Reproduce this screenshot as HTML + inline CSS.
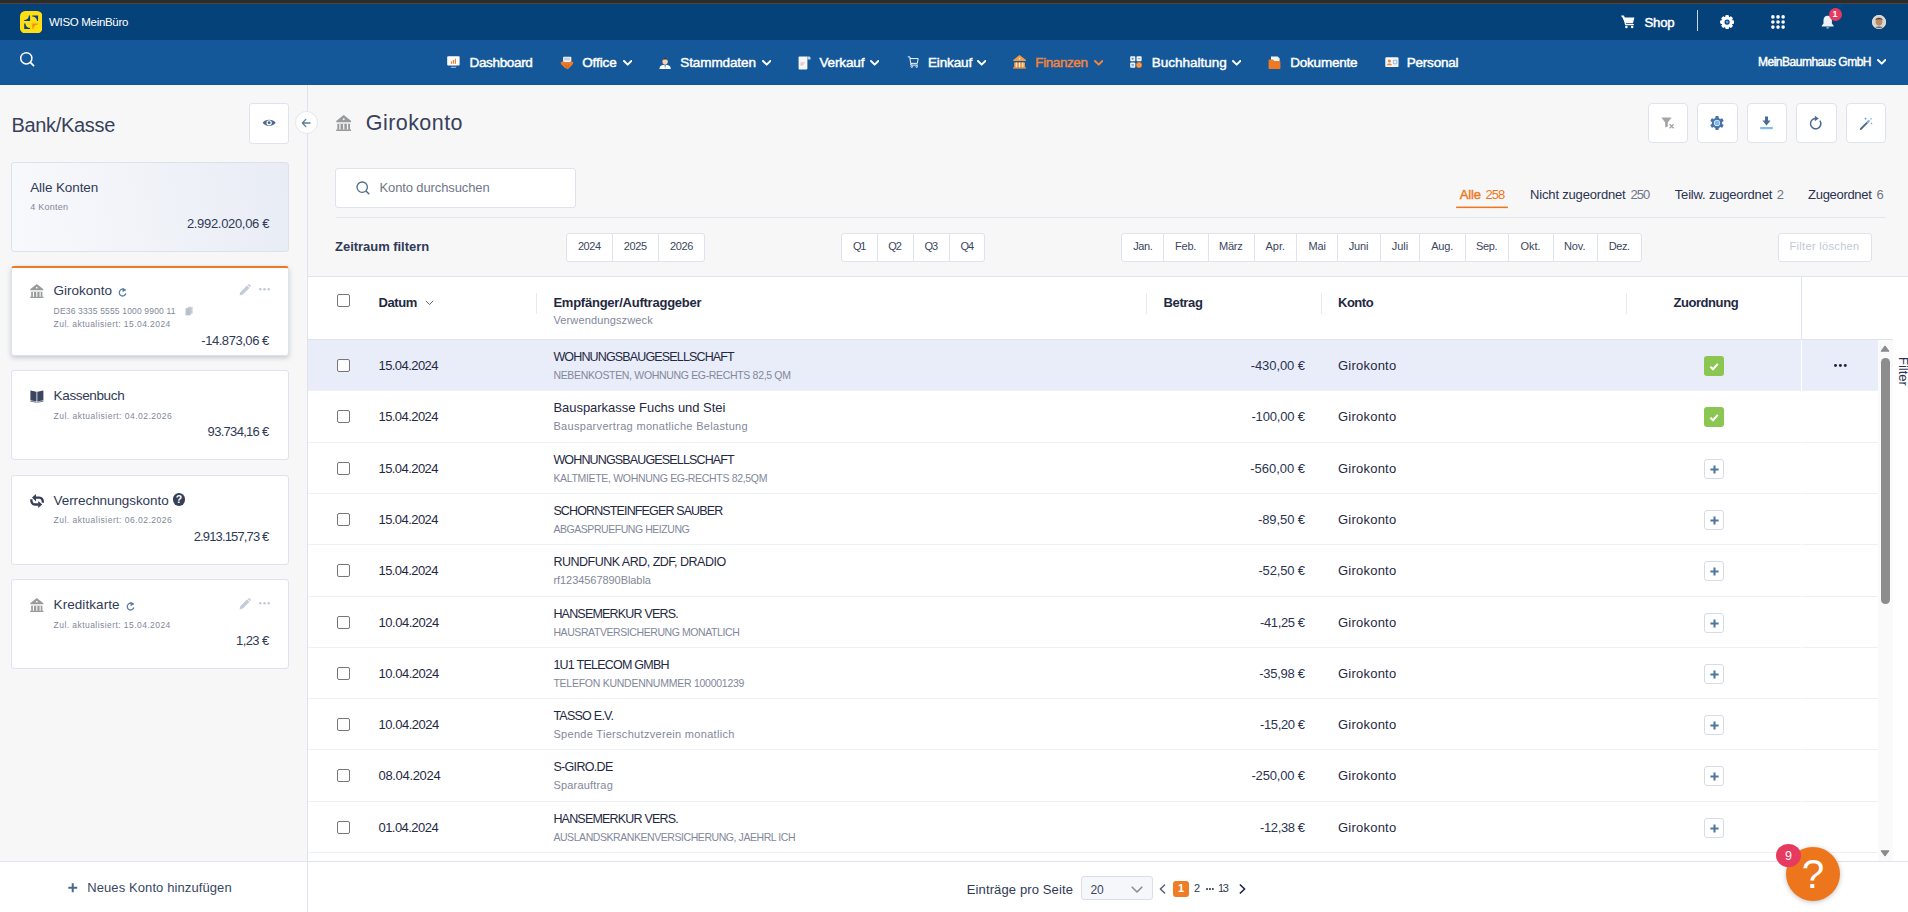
<!DOCTYPE html>
<html lang="de">
<head>
<meta charset="utf-8">
<title>WISO MeinBüro – Bank/Kasse – Girokonto</title>
<style>
*{box-sizing:border-box;margin:0;padding:0}
html,body{width:1908px;height:912px;overflow:hidden;background:#f7f7f7;font-family:"Liberation Sans",sans-serif;color:#1f2942}
body{position:relative}
.t{position:absolute;white-space:nowrap;line-height:1}
.card{position:absolute;left:11px;width:278px;border:1px solid #dde2ef;border-radius:3px;background:#fff}
.btn{position:absolute;background:#fff;border:1px solid #dfe3ee;border-radius:3px}
.seg{position:absolute;top:233px;height:29px;background:#fff;border:1px solid #dfe3ee;border-radius:3px}
.seg i{position:absolute;top:0;width:1px;height:27px;background:#dfe3ee}
.row{position:absolute;left:308px;width:1570px;border-bottom:1px solid #eef0f6;background:#fff}

</style>
</head>
<body>

<header>
<div style="position:absolute;left:0px;top:0px;width:1908px;height:4px;background:#2c2c2c"></div>
<div style="position:absolute;left:0px;top:3px;width:1908px;height:1px;background:#4a4541"></div>
<div style="position:absolute;left:0px;top:4px;width:1908px;height:36px;background:#06427a"></div>
<div style="position:absolute;left:0px;top:40px;width:1908px;height:45px;background:#14589a"></div>
<svg style="position:absolute;left:20px;top:10.8px;" width="22.4" height="22.4" viewBox="0 0 22.4 22.4"><rect x="0" y="0" width="22.4" height="22.4" rx="5.2" fill="#ffde12"/><path d="M10.1 4.4 V10.1 H4.2 V9.1 A4.7 4.7 0 0 0 8.9 4.4 Z" fill="#0a3f8c"/><path d="M12.3 4.4 H18.1 V10.1 H17 A4.7 4.7 0 0 0 12.3 5.4 Z" fill="#0a3f8c"/><path d="M4.2 12.4 H5.4 A4.7 4.7 0 0 0 10.1 17.1 V18.1 H4.2 Z" fill="#0a3f8c"/><path d="M12.3 12.4 H18.1 V13.4 A4.7 4.7 0 0 0 13.4 18.1 H12.3 Z" fill="#f18f10"/></svg>
<span class="t" style="top:16.57px;font-size:11.5px;color:#fff;letter-spacing:-0.314px;left:49px;">WISO MeinBüro</span>
<svg style="position:absolute;left:19px;top:51px;" width="17" height="17" viewBox="0 0 17 17"><circle cx="7.3" cy="7.3" r="5.6" fill="none" stroke="#fff" stroke-width="1.5"/><path d="M11.6 11.6 L14.6 14.6" stroke="#fff" stroke-width="1.7" stroke-linecap="round"/></svg>
<svg style="position:absolute;left:1621px;top:15px;" width="15" height="14" viewBox="0 0 15 14"><path d="M0.6 1 H2.6 L3.3 2.6 H13.4 L12 8.3 H4.3 Z" fill="#fff"/><path d="M0.6 1 H2.6 L4.6 9.6 H12.4" fill="none" stroke="#fff" stroke-width="1.2" stroke-linejoin="round" stroke-linecap="round"/><circle cx="5.4" cy="12" r="1.3" fill="#fff"/><circle cx="11.2" cy="12" r="1.3" fill="#fff"/></svg>
<span class="t" style="top:16.03px;font-size:13.2px;color:#fff;letter-spacing:-0.203px;left:1644.5px;-webkit-text-stroke:0.45px #fff;">Shop</span>
<div style="position:absolute;left:1696.6px;top:10.4px;width:1.5px;height:20.4px;background:#cbd5e6"></div>
<svg style="position:absolute;left:1720.2px;top:14.9px;" width="14.2" height="14.2" viewBox="0 0 14.2 14.2"><g transform="translate(7.1 7.1)" fill="#fff"><rect x="-1.8" y="-7" width="3.6" height="4" rx="1.1" transform="rotate(0)"/><rect x="-1.8" y="-7" width="3.6" height="4" rx="1.1" transform="rotate(45)"/><rect x="-1.8" y="-7" width="3.6" height="4" rx="1.1" transform="rotate(90)"/><rect x="-1.8" y="-7" width="3.6" height="4" rx="1.1" transform="rotate(135)"/><rect x="-1.8" y="-7" width="3.6" height="4" rx="1.1" transform="rotate(180)"/><rect x="-1.8" y="-7" width="3.6" height="4" rx="1.1" transform="rotate(225)"/><rect x="-1.8" y="-7" width="3.6" height="4" rx="1.1" transform="rotate(270)"/><rect x="-1.8" y="-7" width="3.6" height="4" rx="1.1" transform="rotate(315)"/><circle r="5.5"/><circle r="2.6" fill="#06427a"/><circle r="1.5" fill="#5b96d6"/></g></svg>
<svg style="position:absolute;left:1771px;top:15.2px;" width="14" height="14" viewBox="0 0 14 14"><circle cx="1.9" cy="1.9" r="1.8" fill="#fff"/><circle cx="1.9" cy="7" r="1.8" fill="#fff"/><circle cx="1.9" cy="12.1" r="1.8" fill="#fff"/><circle cx="7" cy="1.9" r="1.8" fill="#fff"/><circle cx="7" cy="7" r="1.8" fill="#fff"/><circle cx="7" cy="12.1" r="1.8" fill="#fff"/><circle cx="12.1" cy="1.9" r="1.8" fill="#fff"/><circle cx="12.1" cy="7" r="1.8" fill="#fff"/><circle cx="12.1" cy="12.1" r="1.8" fill="#fff"/></svg>
<svg style="position:absolute;left:1821.4px;top:14.6px;" width="13.4" height="15.3" viewBox="0 0 14 16"><path d="M7 0.8 C4.2 0.8 2.6 3 2.6 5.6 V9 L0.8 11.3 V12 H13.2 V11.3 L11.4 9 V5.6 C11.4 3 9.8 0.8 7 0.8 Z" fill="#eef1f6"/><path d="M5.3 13 A1.8 1.8 0 0 0 8.7 13 Z" fill="#eef1f6"/></svg>
<div style="position:absolute;left:1828.5px;top:8px;width:13px;height:13px;border-radius:50%;background:#e63a5e"></div>
<span class="t" style="top:10.38px;font-size:9px;color:#fff;font-weight:700;left:1835px;transform:translateX(-50%);margin-left:0.00px;">1</span>
<svg style="position:absolute;left:1872px;top:14.8px;" width="14" height="14" viewBox="0 0 15 15"><defs><clipPath id="avc"><circle cx="7.5" cy="7.5" r="7.5"/></clipPath></defs><g clip-path="url(#avc)"><rect width="15" height="15" fill="#d9d3cc"/><ellipse cx="7.5" cy="7" rx="3.6" ry="4.4" fill="#b98a6c"/><path d="M3.6 5.6 C3.8 2.4 11.2 2.4 11.4 5.6 C10 4.2 5 4.2 3.6 5.6 Z" fill="#4a3a30"/><path d="M1.5 15 C2 11.6 13 11.6 13.5 15 Z" fill="#5b6470"/></g><circle cx="7.5" cy="7.5" r="7.1" fill="none" stroke="#e8e8e8" stroke-width="0.8"/></svg>
<span class="t" style="top:55.97px;font-size:13.5px;color:#fff;letter-spacing:-0.339px;left:469.5px;-webkit-text-stroke:0.45px #fff;">Dashboard</span>
<span class="t" style="top:55.97px;font-size:13.5px;color:#fff;letter-spacing:-0.086px;left:582.2px;-webkit-text-stroke:0.45px #fff;">Office</span>
<svg style="position:absolute;left:622.7px;top:59.6px;" width="9.4" height="6.6" viewBox="0 0 9.4 6.6"><path d="M1 1 L4.7 4.6 L8.4 1" fill="none" stroke="#fff" stroke-width="2" stroke-linecap="round" stroke-linejoin="round"/></svg>
<span class="t" style="top:55.97px;font-size:13.5px;color:#fff;letter-spacing:-0.105px;left:680.3px;-webkit-text-stroke:0.45px #fff;">Stammdaten</span>
<svg style="position:absolute;left:761.7px;top:59.6px;" width="9.4" height="6.6" viewBox="0 0 9.4 6.6"><path d="M1 1 L4.7 4.6 L8.4 1" fill="none" stroke="#fff" stroke-width="2" stroke-linecap="round" stroke-linejoin="round"/></svg>
<span class="t" style="top:55.97px;font-size:13.5px;color:#fff;letter-spacing:-0.112px;left:819.4px;-webkit-text-stroke:0.45px #fff;">Verkauf</span>
<svg style="position:absolute;left:870.0px;top:59.6px;" width="9.4" height="6.6" viewBox="0 0 9.4 6.6"><path d="M1 1 L4.7 4.6 L8.4 1" fill="none" stroke="#fff" stroke-width="2" stroke-linecap="round" stroke-linejoin="round"/></svg>
<span class="t" style="top:55.97px;font-size:13.5px;color:#fff;letter-spacing:-0.147px;left:928px;-webkit-text-stroke:0.45px #fff;">Einkauf</span>
<svg style="position:absolute;left:976.7px;top:59.6px;" width="9.4" height="6.6" viewBox="0 0 9.4 6.6"><path d="M1 1 L4.7 4.6 L8.4 1" fill="none" stroke="#fff" stroke-width="2" stroke-linecap="round" stroke-linejoin="round"/></svg>
<span class="t" style="top:55.97px;font-size:13.5px;color:#f3853a;letter-spacing:-0.418px;left:1035.3px;-webkit-text-stroke:0.45px #f3853a;">Finanzen</span>
<svg style="position:absolute;left:1093.7px;top:59.6px;" width="9.4" height="6.6" viewBox="0 0 9.4 6.6"><path d="M1 1 L4.7 4.6 L8.4 1" fill="none" stroke="#f3853a" stroke-width="2" stroke-linecap="round" stroke-linejoin="round"/></svg>
<span class="t" style="top:55.97px;font-size:13.5px;color:#fff;letter-spacing:-0.006px;left:1151.7px;-webkit-text-stroke:0.45px #fff;">Buchhaltung</span>
<svg style="position:absolute;left:1231.7px;top:59.6px;" width="9.4" height="6.6" viewBox="0 0 9.4 6.6"><path d="M1 1 L4.7 4.6 L8.4 1" fill="none" stroke="#fff" stroke-width="2" stroke-linecap="round" stroke-linejoin="round"/></svg>
<span class="t" style="top:55.97px;font-size:13.5px;color:#fff;letter-spacing:-0.227px;left:1290.3px;-webkit-text-stroke:0.45px #fff;">Dokumente</span>
<span class="t" style="top:55.97px;font-size:13.5px;color:#fff;letter-spacing:-0.200px;left:1406.7px;-webkit-text-stroke:0.45px #fff;">Personal</span>
<svg style="position:absolute;left:446.8px;top:56.1px;" width="13" height="12.4" viewBox="0 0 13 12.4"><rect x="0.2" y="0.2" width="12.4" height="9.4" rx="1" fill="#fff"/><rect x="3.8" y="5.4" width="1.2" height="2.4" fill="#f08334"/><rect x="5.8" y="4" width="1.2" height="3.8" fill="#f08334"/><rect x="7.8" y="2.6" width="1.2" height="5.2" fill="#f08334"/><rect x="3.8" y="10.7" width="5.4" height="1.1" rx="0.5" fill="#b9c6da"/></svg>
<svg style="position:absolute;left:559.5px;top:55.5px;" width="14" height="14" viewBox="0 0 14 14"><rect x="3.1" y="0.7" width="8.2" height="5.8" rx="0.8" fill="#f4f6fa"/><path d="M4.2 2.2 H10.2 M4.2 3.8 H10.2" stroke="#9fb0c8" stroke-width="0.7"/><path d="M0.6 6.2 L3 5.2 L5 6.6 L7 6 L9 6.6 L11 5.2 L13.4 6.2 L12.6 8.6 L10.6 10.4 L9.4 12 L7.6 13.2 L6 12.6 L4.4 11.4 L2.6 9.6 L1.2 8.4 Z" fill="#ee7a26"/><path d="M4.6 8.4 L7 10.4 L9.2 8.2 M6 11 L7.4 12.2 M8.2 10.2 L9.2 11.2" stroke="#b9561a" stroke-width="0.7" fill="none"/></svg>
<svg style="position:absolute;left:659.3px;top:56px;" width="12.2" height="13" viewBox="0 0 13 14"><path d="M0.4 14 C0.6 10.2 3.4 9.4 6.5 9.4 C9.6 9.4 12.4 10.2 12.6 14 Z" fill="#fff"/><path d="M5.9 9.6 L6.5 13.8 L7.1 9.6 Z" fill="#3d5a8c"/><ellipse cx="6.5" cy="5.6" rx="2.9" ry="3.5" fill="#f6d3b8"/><path d="M3.4 5 C3.2 0.8 9.8 0.8 9.6 5 C8.8 3.4 4.2 3.4 3.4 5 Z" fill="#3b3a40"/></svg>
<svg style="position:absolute;left:797.5px;top:55.5px;" width="13" height="14" viewBox="0 0 13 14"><path d="M0.6 1.4 C0.6 0.8 1 0.4 1.6 0.4 H9.4 V12.2 C9.4 13 8.8 13.6 8 13.6 H1.6 C1 13.6 0.6 13.2 0.6 12.6 Z" fill="#f4f6fa"/><path d="M9.4 0.4 H11 C12 0.4 12.6 1 12.6 2 V3.4 H9.4 Z" fill="#c5cfdd"/><path d="M2.4 7 H6.6 M2.4 8.8 H5.4" stroke="#f2a0a0" stroke-width="0.9"/></svg>
<svg style="position:absolute;left:906.5px;top:56.3px;" width="12.6" height="12" viewBox="0 0 13 14"><path d="M0.5 1 H2.4 L3 3 M3 3 H12.2 L11.2 8.6 H4 Z" fill="none" stroke="#fff" stroke-width="1.1" stroke-linejoin="round" stroke-linecap="round"/><path d="M4 8.6 L3.4 10.6 H11.6" fill="none" stroke="#fff" stroke-width="1.1" stroke-linecap="round" stroke-linejoin="round"/><circle cx="4.8" cy="12.4" r="1" fill="none" stroke="#fff" stroke-width="0.9"/><circle cx="10.4" cy="12.4" r="1" fill="none" stroke="#fff" stroke-width="0.9"/></svg>
<svg style="position:absolute;left:1012.8px;top:55.3px;" width="13.12" height="13.6" viewBox="0 0 13.6 14.1"><g fill="#f59a45"><path d="M6.8 0 L13.4 5.3 V6.3 H0.2 V5.3 Z"/><rect x="1.2" y="7.7" width="11.2" height="5.2"/><rect x="0.2" y="12.7" width="13.2" height="1.4"/></g><g fill="#fff3e0"><circle cx="6.8" cy="3.7" r="0.85"/><rect x="2.9" y="7.7" width="1.1" height="5"/><rect x="6.25" y="7.7" width="1.1" height="5"/><rect x="9.6" y="7.7" width="1.1" height="5"/></g></svg>
<svg style="position:absolute;left:1130px;top:56.4px;" width="12.2" height="12.2" viewBox="0 0 13.4 13.4"><g fill="#f1f4f9"><rect x="0.2" y="0.2" width="5.6" height="5.6" rx="1"/><rect x="7.2" y="0.2" width="5.6" height="5.6" rx="1"/><rect x="0.2" y="7.2" width="5.6" height="5.6" rx="1"/></g><path d="M1.6 3 H4.4 M3 1.6 V4.4 M8.6 3 H11.4 M1.6 9.4 H4.4 M1.6 10.8 H4.4" stroke="#5b7fb3" stroke-width="0.8"/><circle cx="10" cy="10" r="3.3" fill="#ef7a22"/><circle cx="10" cy="10" r="1.6" fill="none" stroke="#f9d3b5" stroke-width="0.7"/></svg>
<svg style="position:absolute;left:1268px;top:55.5px;" width="13" height="14" viewBox="0 0 13 14"><path d="M3 0.6 H9.6 L11.6 2.6 V7 H3 Z" fill="#f4f6fa"/><path d="M9.6 0.6 V2.6 H11.6 Z" fill="#c5cfdd"/><path d="M0.6 4.4 C0.6 3.8 1 3.4 1.6 3.4 H5 L6.2 5 H11.4 C12 5 12.4 5.4 12.4 6 V12 C12.4 12.6 12 13 11.4 13 H1.6 C1 13 0.6 12.6 0.6 12 Z" fill="#ef7a22"/></svg>
<svg style="position:absolute;left:1384.5px;top:57px;" width="14" height="11" viewBox="0 0 14 11"><rect x="0.3" y="0.3" width="13.2" height="9.8" rx="1.2" fill="#f4f6fa"/><circle cx="4.4" cy="4" r="1.5" fill="#f08334"/><path d="M1.8 8.2 C2 5.8 6.8 5.8 7 8.2 Z" fill="#f08334"/><rect x="8.4" y="3.2" width="3.4" height="3.6" rx="0.6" fill="none" stroke="#7fa0d0" stroke-width="0.8"/></svg>
<span class="t" style="top:55.54px;font-size:12px;color:#fff;letter-spacing:-0.494px;left:1758px;-webkit-text-stroke:0.45px #fff;">MeinBaumhaus GmbH</span>
<svg style="position:absolute;left:1876.7px;top:59px;" width="9.4" height="6.6" viewBox="0 0 9.4 6.6"><path d="M1 1 L4.7 4.6 L8.4 1" fill="none" stroke="#fff" stroke-width="2" stroke-linecap="round" stroke-linejoin="round"/></svg>
</header>

<aside>
<div style="position:absolute;left:307px;top:85px;width:1px;height:827px;background:#dfe3ee"></div>
<span class="t" style="top:114.77px;font-size:20px;color:#38425c;letter-spacing:-0.323px;left:11.5px;">Bank/Kasse</span>
<div class="btn" style="left:249px;top:103px;width:40px;height:40.5px"><svg style="position:absolute;left:11.6px;top:14.3px;" width="14.3" height="9.6" viewBox="0 0 13 9"><path d="M0.4 4.5 C2.4 0.6 10.6 0.6 12.6 4.5 C10.6 8.4 2.4 8.4 0.4 4.5 Z" fill="#4e6b8c"/><circle cx="6.5" cy="4.5" r="2.5" fill="#fff"/><circle cx="6.5" cy="4.5" r="1.4" fill="#4e6b8c"/></svg></div>
<div style="position:absolute;left:295px;top:111px;width:23px;height:23px;border-radius:50%;background:#fff;border:1px solid #e1e6f0"><svg style="position:absolute;left:5px;top:5.5px;" width="10.5" height="10" viewBox="0 0 10.5 10"><path d="M9 5 H1.6 M4.8 1.4 L1.4 5 L4.8 8.6" fill="none" stroke="#5a7d9f" stroke-width="1.35" stroke-linecap="round" stroke-linejoin="round"/></svg></div>
<div class="card" style="top:162px;height:90px;background:linear-gradient(80deg,#f8f9fc 0%,#f2f4f9 40%,#e8ecf5 100%);border-color:#dce1ee"></div>
<span class="t" style="top:180.87px;font-size:13.5px;color:#303a56;letter-spacing:-0.097px;left:30.2px;">Alle Konten</span>
<span class="t" style="top:202.88px;font-size:9px;color:#82889a;letter-spacing:0.246px;left:30.2px;">4 Konten</span>
<span class="t" style="top:217.20px;font-size:13px;color:#303a56;letter-spacing:-0.318px;left:269.5px;transform:translateX(-100%);margin-left:-0.32px;">2.992.020,06 €</span>
<div class="card" style="top:266px;height:89.6px;border-top:2px solid #ec7a24;box-shadow:0 2px 5px rgba(40,50,80,.22)"></div>
<svg style="position:absolute;left:30px;top:283.8px;" width="13.6" height="14.1" viewBox="0 0 13.6 14.1"><g fill="#999a9c"><path d="M6.8 0 L13.4 5.3 V6.3 H0.2 V5.3 Z"/><rect x="1.2" y="7.7" width="11.2" height="5.2"/><rect x="0.2" y="12.7" width="13.2" height="1.4"/></g><g fill="#fff"><circle cx="6.8" cy="3.7" r="0.85"/><rect x="2.9" y="7.7" width="1.1" height="5"/><rect x="6.25" y="7.7" width="1.1" height="5"/><rect x="9.6" y="7.7" width="1.1" height="5"/></g></svg>
<span class="t" style="top:283.77px;font-size:13.5px;color:#303a56;letter-spacing:-0.003px;left:53.6px;">Girokonto</span>
<svg style="position:absolute;left:117.8px;top:288px;overflow:visible" width="9" height="9" viewBox="0 0 12 12"><path d="M9.9 3.6 A4.5 4.5 0 1 0 10.5 7.4" fill="none" stroke="#5a7d9f" stroke-width="1.7"/><path d="M5.8 -0.4 L11 2.4 L6.2 5.6 Z" fill="#5a7d9f"/></svg>
<svg style="position:absolute;left:238.5px;top:283.5px;" width="12" height="12" viewBox="0 0 12 12"><path d="M0.6 11.4 L1.4 8.2 L8 1.6 L10.4 4 L3.8 10.6 Z" fill="#c3cad8"/><path d="M8.6 1 L9.4 0.4 C9.8 0.1 10.3 0.1 10.7 0.5 L11.5 1.3 C11.9 1.7 11.9 2.2 11.5 2.6 L11 3.2 Z" fill="#c3cad8"/></svg>
<svg style="position:absolute;left:259px;top:288.2px;overflow:visible" width="11.5" height="2.8" viewBox="0 0 11.5 2.8"><circle cx="1.3" cy="1.3" r="1.3" fill="#c3cad8"/><circle cx="5.5" cy="1.3" r="1.3" fill="#c3cad8"/><circle cx="9.700000000000001" cy="1.3" r="1.3" fill="#c3cad8"/></svg>
<span class="t" style="top:306.90px;font-size:8.5px;color:#82889a;letter-spacing:0.166px;left:53.6px;">DE36 3335 5555 1000 9900 11</span>
<svg style="position:absolute;left:184.5px;top:306px;" width="8.5" height="10" viewBox="0 0 8.5 10"><path d="M2.8 0.8 H7.6 V7.8 H2.8 Z" fill="#c9ced8"/><path d="M0.6 2.2 H5.6 V9.4 H0.6 Z" fill="#b9bfcc"/></svg>
<span class="t" style="top:319.80px;font-size:8.5px;color:#82889a;letter-spacing:0.440px;left:53.6px;">Zul. aktualisiert: 15.04.2024</span>
<span class="t" style="top:333.70px;font-size:13px;color:#303a56;letter-spacing:-0.451px;left:269.3px;transform:translateX(-100%);margin-left:-0.45px;">-14.873,06 €</span>
<div class="card" style="top:370px;height:90px"></div>
<svg style="position:absolute;left:30px;top:390px;" width="14" height="12.6" viewBox="0 0 14 12.6"><g fill="#3b4560"><path d="M0.4 0.5 L6.5 1.7 V11.4 L0.4 10.2 Z"/><path d="M13.4 0.5 L7.3 1.7 V11.4 L13.4 10.2 Z"/></g><path d="M0.3 11.2 L6.6 12.3 M13.5 11.2 L7.2 12.3" stroke="#3b4560" stroke-width="0.7" fill="none"/></svg>
<span class="t" style="top:388.57px;font-size:13.5px;color:#303a56;letter-spacing:-0.361px;left:53.6px;">Kassenbuch</span>
<span class="t" style="top:411.80px;font-size:8.5px;color:#82889a;letter-spacing:0.488px;left:53.6px;">Zul. aktualisiert: 04.02.2026</span>
<span class="t" style="top:425.10px;font-size:13px;color:#303a56;letter-spacing:-0.699px;left:269.3px;transform:translateX(-100%);margin-left:-0.70px;">93.734,16 €</span>
<div class="card" style="top:475px;height:90px"></div>
<svg style="position:absolute;left:30px;top:494px;overflow:visible" width="14.2" height="14.2" viewBox="0 0 14.2 14.2"><g fill="none" stroke="#363f58" stroke-width="2.3"><path d="M5.6 3.6 H9.2 C11.8 3.6 13 5.6 12.9 8.8"/><path d="M8.6 10.5 H5 C2.4 10.5 1.2 8.5 1.3 5.3"/></g><g fill="#363f58"><path d="M2 3.6 L6 0 V7.4 Z"/><path d="M12.2 10.5 L8.2 6.9 V14.1 Z"/></g></svg>
<span class="t" style="top:493.77px;font-size:13.5px;color:#303a56;letter-spacing:-0.079px;left:53.6px;">Verrechnungskonto</span>
<div style="position:absolute;left:173px;top:493.4px;width:12px;height:12.4px;border-radius:50%;background:#363f58"></div>
<span class="t" style="top:494.41px;font-size:10.5px;color:#fff;font-weight:700;left:179px;transform:translateX(-50%);margin-left:0.00px;">?</span>
<span class="t" style="top:516.00px;font-size:8.5px;color:#82889a;letter-spacing:0.488px;left:53.6px;">Zul. aktualisiert: 06.02.2026</span>
<span class="t" style="top:529.70px;font-size:13px;color:#303a56;letter-spacing:-0.854px;left:269.3px;transform:translateX(-100%);margin-left:-0.85px;">2.913.157,73 €</span>
<div class="card" style="top:579px;height:90px"></div>
<svg style="position:absolute;left:30px;top:598.1px;" width="13.6" height="14.1" viewBox="0 0 13.6 14.1"><g fill="#999a9c"><path d="M6.8 0 L13.4 5.3 V6.3 H0.2 V5.3 Z"/><rect x="1.2" y="7.7" width="11.2" height="5.2"/><rect x="0.2" y="12.7" width="13.2" height="1.4"/></g><g fill="#fff"><circle cx="6.8" cy="3.7" r="0.85"/><rect x="2.9" y="7.7" width="1.1" height="5"/><rect x="6.25" y="7.7" width="1.1" height="5"/><rect x="9.6" y="7.7" width="1.1" height="5"/></g></svg>
<span class="t" style="top:597.87px;font-size:13.5px;color:#303a56;letter-spacing:0.065px;left:53.6px;">Kreditkarte</span>
<svg style="position:absolute;left:126px;top:602.2px;overflow:visible" width="9" height="9" viewBox="0 0 12 12"><path d="M9.9 3.6 A4.5 4.5 0 1 0 10.5 7.4" fill="none" stroke="#5a7d9f" stroke-width="1.7"/><path d="M5.8 -0.4 L11 2.4 L6.2 5.6 Z" fill="#5a7d9f"/></svg>
<svg style="position:absolute;left:238.5px;top:597.7px;" width="12" height="12" viewBox="0 0 12 12"><path d="M0.6 11.4 L1.4 8.2 L8 1.6 L10.4 4 L3.8 10.6 Z" fill="#c3cad8"/><path d="M8.6 1 L9.4 0.4 C9.8 0.1 10.3 0.1 10.7 0.5 L11.5 1.3 C11.9 1.7 11.9 2.2 11.5 2.6 L11 3.2 Z" fill="#c3cad8"/></svg>
<svg style="position:absolute;left:259px;top:602.4px;overflow:visible" width="11.5" height="2.8" viewBox="0 0 11.5 2.8"><circle cx="1.3" cy="1.3" r="1.3" fill="#c3cad8"/><circle cx="5.5" cy="1.3" r="1.3" fill="#c3cad8"/><circle cx="9.700000000000001" cy="1.3" r="1.3" fill="#c3cad8"/></svg>
<span class="t" style="top:621.00px;font-size:8.5px;color:#82889a;letter-spacing:0.440px;left:53.6px;">Zul. aktualisiert: 15.04.2024</span>
<span class="t" style="top:633.50px;font-size:13px;color:#303a56;letter-spacing:-0.576px;left:269.3px;transform:translateX(-100%);margin-left:-0.58px;">1,23 €</span>
<div style="position:absolute;left:0px;top:861px;width:307px;height:51px;background:#fff;border-top:1px solid #dfe3ee"></div>
<svg style="position:absolute;left:68px;top:883.3px;" width="9.5" height="9.5" viewBox="0 0 9.5 9.5"><path d="M4.75 0.3 V9.2 M0.3 4.75 H9.2" stroke="#4a6b90" stroke-width="2"/></svg>
<span class="t" style="top:881.40px;font-size:13px;color:#3a4763;letter-spacing:0.100px;left:87.2px;">Neues Konto hinzufügen</span>
</aside>

<main>
<svg style="position:absolute;left:335.6px;top:115px;" width="15.43" height="16" viewBox="0 0 13.6 14.1"><g fill="#999a9c"><path d="M6.8 0 L13.4 5.3 V6.3 H0.2 V5.3 Z"/><rect x="1.2" y="7.7" width="11.2" height="5.2"/><rect x="0.2" y="12.7" width="13.2" height="1.4"/></g><g fill="#f7f7f7"><circle cx="6.8" cy="3.7" r="0.85"/><rect x="2.9" y="7.7" width="1.1" height="5"/><rect x="6.25" y="7.7" width="1.1" height="5"/><rect x="9.6" y="7.7" width="1.1" height="5"/></g></svg>
<span class="t" style="top:112.80px;font-size:21.5px;color:#38425c;letter-spacing:0.442px;left:365.8px;">Girokonto</span>
<div class="btn" style="left:1648px;top:103px;width:40px;height:40px;border-radius:4px"><svg style="position:absolute;left:12px;top:13.2px;overflow:visible" width="14" height="14" viewBox="0 0 14 14"><path d="M0.4 0.6 H10.6 L6.8 5.4 V9.6 L4.2 10.6 V5.4 Z" fill="#a4a4a4"/><path d="M8.6 7.2 L12.6 11.2 M12.6 7.2 L8.6 11.2" stroke="#a4a4a4" stroke-width="1.3"/></svg></div>
<div class="btn" style="left:1697.4px;top:103px;width:40.6px;height:40px;border-radius:4px"><svg style="position:absolute;left:12px;top:12.4px;overflow:visible" width="14" height="14" viewBox="0 0 14 14"><g transform="translate(7 7)"><rect x="-1.7" y="-6.9" width="3.4" height="4" rx="0.9" fill="#4a74a6" transform="rotate(0)"/><rect x="-1.7" y="-6.9" width="3.4" height="4" rx="0.9" fill="#4a74a6" transform="rotate(60)"/><rect x="-1.7" y="-6.9" width="3.4" height="4" rx="0.9" fill="#4a74a6" transform="rotate(120)"/><rect x="-1.7" y="-6.9" width="3.4" height="4" rx="0.9" fill="#4a74a6" transform="rotate(180)"/><rect x="-1.7" y="-6.9" width="3.4" height="4" rx="0.9" fill="#4a74a6" transform="rotate(240)"/><rect x="-1.7" y="-6.9" width="3.4" height="4" rx="0.9" fill="#4a74a6" transform="rotate(300)"/><circle r="5.2" fill="#4a74a6"/><circle r="3.1" fill="#fff"/><circle r="2.5" fill="#79baf1"/></g></svg></div>
<div class="btn" style="left:1747px;top:103px;width:40px;height:40px;border-radius:4px"><svg style="position:absolute;left:12.1px;top:12.4px;overflow:visible" width="14" height="14" viewBox="0 0 14 14"><path d="M5 0.4 H8 V4.6 H10.6 L6.5 9.6 L2.4 4.6 H5 Z" fill="#4a6c92"/><rect x="0.2" y="11" width="12.6" height="2.2" fill="#7fbdee"/></svg></div>
<div class="btn" style="left:1796.4px;top:103px;width:40.6px;height:40px;border-radius:4px"><svg style="position:absolute;left:12.1px;top:12.4px;overflow:visible" width="14" height="14" viewBox="0 0 14 14"><path d="M10.9 4.6 A5.2 5.2 0 1 1 6.6 2.4" fill="none" stroke="#4a6c92" stroke-width="1.5"/><path d="M5.8 -0.2 L9.8 2.5 L5.8 5.2 Z" fill="#4a6c92"/></svg></div>
<div class="btn" style="left:1846px;top:103px;width:40px;height:40px;border-radius:4px"><svg style="position:absolute;left:12.6px;top:12.6px;overflow:visible" width="14" height="14" viewBox="0 0 14 14"><path d="M0.8 12 L8.4 4.4" stroke="#4a6c92" stroke-width="1.9" stroke-linecap="round"/><path d="M7.6 5.2 L9 3.8" stroke="#9db3cc" stroke-width="1.9" stroke-linecap="round"/><path d="M5.6 0 L6.1 1.3 L7.4 1.8 L6.1 2.3 L5.6 3.6 L5.1 2.3 L3.8 1.8 L5.1 1.3 Z M11 0.4 L11.4 1.4 L12.4 1.8 L11.4 2.2 L11 3.2 L10.6 2.2 L9.6 1.8 L10.6 1.4 Z M11.4 5 L11.8 6 L12.8 6.4 L11.8 6.8 L11.4 7.8 L11 6.8 L10 6.4 L11 6 Z" fill="#6fb3ef"/></svg></div>
<div class="btn" style="left:335px;top:168px;width:241px;height:39.5px"></div>
<svg style="position:absolute;left:355.5px;top:181px;" width="15" height="15" viewBox="0 0 15 15"><circle cx="6.2" cy="6.2" r="5.2" fill="none" stroke="#4d6a8d" stroke-width="1.3"/><path d="M10.2 10.2 L12.8 12.8" stroke="#4d6a8d" stroke-width="1.5" stroke-linecap="round"/></svg>
<span class="t" style="top:181.30px;font-size:13px;color:#707789;letter-spacing:-0.119px;left:379.5px;">Konto durchsuchen</span>
<div style="position:absolute;left:335.5px;top:217px;width:1550.2px;height:1px;background:#e1e5ef"></div>
<span class="t" style="top:187.70px;font-size:13px;color:#ee7621;letter-spacing:-0.122px;left:1459.7px;-webkit-text-stroke:0.4px #ee7621;">Alle</span>
<span class="t" style="top:187.70px;font-size:13px;color:#ee7621;letter-spacing:-0.901px;left:1485.4px;">258</span>
<svg style="position:absolute;left:1456px;top:206px;" width="52" height="3" viewBox="0 0 52 3"><rect x="0.1" y="0.55" width="51.8" height="1.55" fill="#ee7621"/></svg>
<span class="t" style="top:187.70px;font-size:13px;color:#2a3450;letter-spacing:-0.180px;left:1530.1px;">Nicht zugeordnet</span>
<span class="t" style="top:187.70px;font-size:13px;color:#6e7689;letter-spacing:-1.034px;left:1630.6px;">250</span>
<span class="t" style="top:187.70px;font-size:13px;color:#2a3450;letter-spacing:-0.185px;left:1674.8px;">Teilw. zugeordnet</span>
<span class="t" style="top:187.70px;font-size:13px;color:#6e7689;letter-spacing:-1.434px;left:1776.7px;">2</span>
<span class="t" style="top:187.70px;font-size:13px;color:#2a3450;letter-spacing:-0.310px;left:1808.1px;">Zugeordnet</span>
<span class="t" style="top:187.70px;font-size:13px;color:#6e7689;letter-spacing:-1.434px;left:1876.6px;">6</span>
<span class="t" style="top:239.80px;font-size:13px;color:#303b58;font-weight:700;letter-spacing:-0.039px;left:335.1px;">Zeitraum filtern</span>
<div class="seg" style="left:566px;width:138.8px"><i style="left:45.4px"></i><i style="left:91.4px"></i></div><span class="t" style="top:240.89px;font-size:11px;color:#3b4660;letter-spacing:-0.421px;left:577.9px;">2024</span><span class="t" style="top:240.89px;font-size:11px;color:#3b4660;letter-spacing:-0.421px;left:623.8px;">2025</span><span class="t" style="top:240.89px;font-size:11px;color:#3b4660;letter-spacing:-0.396px;left:670.1px;">2026</span>
<div class="seg" style="left:841px;width:144.0px"><i style="left:34.8px"></i><i style="left:70.6px"></i><i style="left:106.7px"></i></div><span class="t" style="top:240.89px;font-size:11px;color:#3b4660;letter-spacing:-1.294px;left:853px;">Q1</span><span class="t" style="top:240.89px;font-size:11px;color:#3b4660;letter-spacing:-1.144px;left:888.3px;">Q2</span><span class="t" style="top:240.89px;font-size:11px;color:#3b4660;letter-spacing:-1.144px;left:924.5px;">Q3</span><span class="t" style="top:240.89px;font-size:11px;color:#3b4660;letter-spacing:-0.944px;left:960.4px;">Q4</span>
<div class="seg" style="left:1121px;width:520.6px"><i style="left:41.2px"></i><i style="left:85.5px"></i><i style="left:132.1px"></i><i style="left:174.0px"></i><i style="left:215.4px"></i><i style="left:258.2px"></i><i style="left:297.3px"></i><i style="left:342.5px"></i><i style="left:386.3px"></i><i style="left:430.5px"></i><i style="left:475.2px"></i></div><span class="t" style="top:240.89px;font-size:11px;color:#3b4660;letter-spacing:-0.449px;left:1133.3px;">Jan.</span><span class="t" style="top:240.89px;font-size:11px;color:#3b4660;letter-spacing:-0.254px;left:1175.1px;">Feb.</span><span class="t" style="top:240.89px;font-size:11px;color:#3b4660;letter-spacing:-0.163px;left:1218.9px;">März</span><span class="t" style="top:240.89px;font-size:11px;color:#3b4660;letter-spacing:0.005px;left:1265.5px;">Apr.</span><span class="t" style="top:240.89px;font-size:11px;color:#3b4660;letter-spacing:-0.045px;left:1308.4px;">Mai</span><span class="t" style="top:240.89px;font-size:11px;color:#3b4660;letter-spacing:-0.172px;left:1348.8px;">Juni</span><span class="t" style="top:240.89px;font-size:11px;color:#3b4660;letter-spacing:0.021px;left:1391.7px;">Juli</span><span class="t" style="top:240.89px;font-size:11px;color:#3b4660;letter-spacing:-0.185px;left:1431.2px;">Aug.</span><span class="t" style="top:240.89px;font-size:11px;color:#3b4660;letter-spacing:-0.310px;left:1475.9px;">Sep.</span><span class="t" style="top:240.89px;font-size:11px;color:#3b4660;letter-spacing:-0.043px;left:1520.6px;">Okt.</span><span class="t" style="top:240.89px;font-size:11px;color:#3b4660;letter-spacing:-0.078px;left:1563.9px;">Nov.</span><span class="t" style="top:240.89px;font-size:11px;color:#3b4660;letter-spacing:-0.431px;left:1608.7px;">Dez.</span>
<div class="seg" style="left:1778px;width:93.6px"></div>
<span class="t" style="top:240.89px;font-size:11px;color:#c3c8d3;letter-spacing:0.327px;left:1789.5px;">Filter löschen</span>
</main>

<section>
<div style="position:absolute;left:308px;top:276px;width:1600px;height:585px;background:#fff;border-top:1px solid #dfe3ee"></div>
<div style="position:absolute;left:337px;top:294px;width:13px;height:13px;border:1px solid #767676;border-radius:2px;background:#fff"></div>
<span class="t" style="top:296.30px;font-size:13px;color:#1f2942;font-weight:700;letter-spacing:-0.391px;left:378.5px;">Datum</span>
<svg style="position:absolute;left:424.5px;top:300px;" width="9" height="6" viewBox="0 0 9 6"><path d="M0.8 0.8 L4.5 4.6 L8.2 0.8" fill="none" stroke="#5c6579" stroke-width="1"/></svg>
<span class="t" style="top:296.30px;font-size:13px;color:#1f2942;font-weight:700;letter-spacing:-0.234px;left:553.4px;">Empfänger/Auftraggeber</span>
<span class="t" style="top:314.89px;font-size:11px;color:#82889a;letter-spacing:0.142px;left:553.4px;">Verwendungszweck</span>
<span class="t" style="top:296.30px;font-size:13px;color:#1f2942;font-weight:700;letter-spacing:-0.365px;left:1163.5px;">Betrag</span>
<span class="t" style="top:296.30px;font-size:13px;color:#1f2942;font-weight:700;letter-spacing:-0.489px;left:1338px;">Konto</span>
<span class="t" style="top:296.30px;font-size:13px;color:#1f2942;font-weight:700;letter-spacing:-0.422px;left:1673.4px;">Zuordnung</span>
<div style="position:absolute;left:536.3px;top:292.5px;width:1px;height:21px;background:#e6e9f1"></div>
<div style="position:absolute;left:1146px;top:292.5px;width:1px;height:21px;background:#e6e9f1"></div>
<div style="position:absolute;left:1321.2px;top:292.5px;width:1px;height:21px;background:#e6e9f1"></div>
<div style="position:absolute;left:1626.2px;top:292.5px;width:1px;height:21px;background:#e6e9f1"></div>
<div style="position:absolute;left:1801px;top:277px;width:1px;height:63px;background:#dfe3ee"></div>
<div style="position:absolute;left:308px;top:339px;width:1585px;height:1px;background:#dfe3ee"></div>
<div class="row" style="top:340px;height:51px;background:#e9edf9"></div>
<div style="position:absolute;left:337px;top:359px;width:13px;height:13px;border:1px solid #767676;border-radius:2px;background:#fff"></div>
<span class="t" style="top:359.20px;font-size:13px;color:#1f2942;letter-spacing:-0.568px;left:378.5px;">15.04.2024</span>
<span class="t" style="top:350.62px;font-size:12.5px;color:#1f2942;letter-spacing:-0.849px;left:553.4px;">WOHNUNGSBAUGESELLSCHAFT</span>
<span class="t" style="top:370.31px;font-size:10.5px;color:#82889a;letter-spacing:-0.329px;left:553.4px;">NEBENKOSTEN, WOHNUNG EG-RECHTS 82,5 QM</span>
<span class="t" style="top:359.20px;font-size:13px;color:#2a3450;letter-spacing:-0.082px;left:1305px;transform:translateX(-100%);margin-left:-0.08px;">-430,00 €</span>
<span class="t" style="top:359.20px;font-size:13px;color:#1f2942;letter-spacing:0.225px;left:1338px;">Girokonto</span>
<div style="position:absolute;left:1704px;top:356px;width:20px;height:20px;border-radius:3px;background:#8bc653"><svg style="position:absolute;left:5px;top:5.5px;" width="10" height="9" viewBox="0 0 10 9"><path d="M1.4 4.6 L4 7.2 L8.8 1.8" fill="none" stroke="#fff" stroke-width="2"/></svg></div>
<svg style="position:absolute;left:1833.6px;top:364px;overflow:visible" width="13.3" height="3.2" viewBox="0 0 13.3 3.2"><circle cx="1.5" cy="1.5" r="1.5" fill="#1f2942"/><circle cx="6.4" cy="1.5" r="1.5" fill="#1f2942"/><circle cx="11.3" cy="1.5" r="1.5" fill="#1f2942"/></svg>
<div class="row" style="top:391px;height:52px;background:#fff"></div>
<div style="position:absolute;left:337px;top:410px;width:13px;height:13px;border:1px solid #767676;border-radius:2px;background:#fff"></div>
<span class="t" style="top:410.20px;font-size:13px;color:#1f2942;letter-spacing:-0.568px;left:378.5px;">15.04.2024</span>
<span class="t" style="top:401.20px;font-size:13px;color:#1f2942;letter-spacing:-0.027px;left:553.4px;">Bausparkasse Fuchs und Stei</span>
<span class="t" style="top:420.89px;font-size:11px;color:#82889a;letter-spacing:0.318px;left:553.4px;">Bausparvertrag monatliche Belastung</span>
<span class="t" style="top:410.20px;font-size:13px;color:#2a3450;letter-spacing:-0.171px;left:1305px;transform:translateX(-100%);margin-left:-0.17px;">-100,00 €</span>
<span class="t" style="top:410.20px;font-size:13px;color:#1f2942;letter-spacing:0.225px;left:1338px;">Girokonto</span>
<div style="position:absolute;left:1704px;top:407px;width:20px;height:20px;border-radius:3px;background:#8bc653"><svg style="position:absolute;left:5px;top:5.5px;" width="10" height="9" viewBox="0 0 10 9"><path d="M1.4 4.6 L4 7.2 L8.8 1.8" fill="none" stroke="#fff" stroke-width="2"/></svg></div>
<div class="row" style="top:443px;height:51px;background:#fff"></div>
<div style="position:absolute;left:337px;top:462px;width:13px;height:13px;border:1px solid #767676;border-radius:2px;background:#fff"></div>
<span class="t" style="top:462.20px;font-size:13px;color:#1f2942;letter-spacing:-0.568px;left:378.5px;">15.04.2024</span>
<span class="t" style="top:453.62px;font-size:12.5px;color:#1f2942;letter-spacing:-0.849px;left:553.4px;">WOHNUNGSBAUGESELLSCHAFT</span>
<span class="t" style="top:473.31px;font-size:10.5px;color:#82889a;letter-spacing:-0.323px;left:553.4px;">KALTMIETE, WOHNUNG EG-RECHTS 82,5QM</span>
<span class="t" style="top:462.20px;font-size:13px;color:#2a3450;letter-spacing:-0.026px;left:1305px;transform:translateX(-100%);margin-left:-0.03px;">-560,00 €</span>
<span class="t" style="top:462.20px;font-size:13px;color:#1f2942;letter-spacing:0.225px;left:1338px;">Girokonto</span>
<div style="position:absolute;left:1704px;top:459px;width:20px;height:20px;border-radius:3px;background:#fff;border:1px solid #d6dbe8"><svg style="position:absolute;left:4.5px;top:4.5px;" width="9" height="9" viewBox="0 0 9 9"><path d="M4.5 0.4 V8.6 M0.4 4.5 H8.6" stroke="#4f789f" stroke-width="2.1"/></svg></div>
<div class="row" style="top:494px;height:51px;background:#fff"></div>
<div style="position:absolute;left:337px;top:513px;width:13px;height:13px;border:1px solid #767676;border-radius:2px;background:#fff"></div>
<span class="t" style="top:513.20px;font-size:13px;color:#1f2942;letter-spacing:-0.568px;left:378.5px;">15.04.2024</span>
<span class="t" style="top:504.62px;font-size:12.5px;color:#1f2942;letter-spacing:-0.866px;left:553.4px;">SCHORNSTEINFEGER SAUBER</span>
<span class="t" style="top:524.31px;font-size:10.5px;color:#82889a;letter-spacing:-0.447px;left:553.4px;">ABGASPRUEFUNG HEIZUNG</span>
<span class="t" style="top:513.20px;font-size:13px;color:#2a3450;letter-spacing:-0.100px;left:1305px;transform:translateX(-100%);margin-left:-0.10px;">-89,50 €</span>
<span class="t" style="top:513.20px;font-size:13px;color:#1f2942;letter-spacing:0.225px;left:1338px;">Girokonto</span>
<div style="position:absolute;left:1704px;top:510px;width:20px;height:20px;border-radius:3px;background:#fff;border:1px solid #d6dbe8"><svg style="position:absolute;left:4.5px;top:4.5px;" width="9" height="9" viewBox="0 0 9 9"><path d="M4.5 0.4 V8.6 M0.4 4.5 H8.6" stroke="#4f789f" stroke-width="2.1"/></svg></div>
<div class="row" style="top:545px;height:52px;background:#fff"></div>
<div style="position:absolute;left:337px;top:564px;width:13px;height:13px;border:1px solid #767676;border-radius:2px;background:#fff"></div>
<span class="t" style="top:564.20px;font-size:13px;color:#1f2942;letter-spacing:-0.568px;left:378.5px;">15.04.2024</span>
<span class="t" style="top:555.62px;font-size:12.5px;color:#1f2942;letter-spacing:-0.497px;left:553.4px;">RUNDFUNK ARD, ZDF, DRADIO</span>
<span class="t" style="top:574.89px;font-size:11px;color:#82889a;letter-spacing:-0.055px;left:553.4px;">rf1234567890Blabla</span>
<span class="t" style="top:564.20px;font-size:13px;color:#2a3450;letter-spacing:-0.163px;left:1305px;transform:translateX(-100%);margin-left:-0.16px;">-52,50 €</span>
<span class="t" style="top:564.20px;font-size:13px;color:#1f2942;letter-spacing:0.225px;left:1338px;">Girokonto</span>
<div style="position:absolute;left:1704px;top:561px;width:20px;height:20px;border-radius:3px;background:#fff;border:1px solid #d6dbe8"><svg style="position:absolute;left:4.5px;top:4.5px;" width="9" height="9" viewBox="0 0 9 9"><path d="M4.5 0.4 V8.6 M0.4 4.5 H8.6" stroke="#4f789f" stroke-width="2.1"/></svg></div>
<div class="row" style="top:597px;height:51px;background:#fff"></div>
<div style="position:absolute;left:337px;top:616px;width:13px;height:13px;border:1px solid #767676;border-radius:2px;background:#fff"></div>
<span class="t" style="top:616.20px;font-size:13px;color:#1f2942;letter-spacing:-0.478px;left:378.5px;">10.04.2024</span>
<span class="t" style="top:607.62px;font-size:12.5px;color:#1f2942;letter-spacing:-0.808px;left:553.4px;">HANSEMERKUR VERS.</span>
<span class="t" style="top:627.31px;font-size:10.5px;color:#82889a;letter-spacing:-0.413px;left:553.4px;">HAUSRATVERSICHERUNG MONATLICH</span>
<span class="t" style="top:616.20px;font-size:13px;color:#2a3450;letter-spacing:-0.400px;left:1305px;transform:translateX(-100%);margin-left:-0.40px;">-41,25 €</span>
<span class="t" style="top:616.20px;font-size:13px;color:#1f2942;letter-spacing:0.225px;left:1338px;">Girokonto</span>
<div style="position:absolute;left:1704px;top:613px;width:20px;height:20px;border-radius:3px;background:#fff;border:1px solid #d6dbe8"><svg style="position:absolute;left:4.5px;top:4.5px;" width="9" height="9" viewBox="0 0 9 9"><path d="M4.5 0.4 V8.6 M0.4 4.5 H8.6" stroke="#4f789f" stroke-width="2.1"/></svg></div>
<div class="row" style="top:648px;height:51px;background:#fff"></div>
<div style="position:absolute;left:337px;top:667px;width:13px;height:13px;border:1px solid #767676;border-radius:2px;background:#fff"></div>
<span class="t" style="top:667.20px;font-size:13px;color:#1f2942;letter-spacing:-0.478px;left:378.5px;">10.04.2024</span>
<span class="t" style="top:658.62px;font-size:12.5px;color:#1f2942;letter-spacing:-0.761px;left:553.4px;">1U1 TELECOM GMBH</span>
<span class="t" style="top:678.31px;font-size:10.5px;color:#82889a;letter-spacing:-0.254px;left:553.4px;">TELEFON KUNDENNUMMER 100001239</span>
<span class="t" style="top:667.20px;font-size:13px;color:#2a3450;letter-spacing:-0.263px;left:1305px;transform:translateX(-100%);margin-left:-0.26px;">-35,98 €</span>
<span class="t" style="top:667.20px;font-size:13px;color:#1f2942;letter-spacing:0.225px;left:1338px;">Girokonto</span>
<div style="position:absolute;left:1704px;top:664px;width:20px;height:20px;border-radius:3px;background:#fff;border:1px solid #d6dbe8"><svg style="position:absolute;left:4.5px;top:4.5px;" width="9" height="9" viewBox="0 0 9 9"><path d="M4.5 0.4 V8.6 M0.4 4.5 H8.6" stroke="#4f789f" stroke-width="2.1"/></svg></div>
<div class="row" style="top:699px;height:51px;background:#fff"></div>
<div style="position:absolute;left:337px;top:718px;width:13px;height:13px;border:1px solid #767676;border-radius:2px;background:#fff"></div>
<span class="t" style="top:718.20px;font-size:13px;color:#1f2942;letter-spacing:-0.478px;left:378.5px;">10.04.2024</span>
<span class="t" style="top:709.62px;font-size:12.5px;color:#1f2942;letter-spacing:-0.749px;left:553.4px;">TASSO E.V.</span>
<span class="t" style="top:728.89px;font-size:11px;color:#82889a;letter-spacing:0.305px;left:553.4px;">Spende Tierschutzverein monatlich</span>
<span class="t" style="top:718.20px;font-size:13px;color:#2a3450;letter-spacing:-0.400px;left:1305px;transform:translateX(-100%);margin-left:-0.40px;">-15,20 €</span>
<span class="t" style="top:718.20px;font-size:13px;color:#1f2942;letter-spacing:0.225px;left:1338px;">Girokonto</span>
<div style="position:absolute;left:1704px;top:715px;width:20px;height:20px;border-radius:3px;background:#fff;border:1px solid #d6dbe8"><svg style="position:absolute;left:4.5px;top:4.5px;" width="9" height="9" viewBox="0 0 9 9"><path d="M4.5 0.4 V8.6 M0.4 4.5 H8.6" stroke="#4f789f" stroke-width="2.1"/></svg></div>
<div class="row" style="top:750px;height:52px;background:#fff"></div>
<div style="position:absolute;left:337px;top:769px;width:13px;height:13px;border:1px solid #767676;border-radius:2px;background:#fff"></div>
<span class="t" style="top:769.20px;font-size:13px;color:#1f2942;letter-spacing:-0.328px;left:378.5px;">08.04.2024</span>
<span class="t" style="top:760.62px;font-size:12.5px;color:#1f2942;letter-spacing:-0.677px;left:553.4px;">S-GIRO.DE</span>
<span class="t" style="top:779.89px;font-size:11px;color:#82889a;letter-spacing:0.192px;left:553.4px;">Sparauftrag</span>
<span class="t" style="top:769.20px;font-size:13px;color:#2a3450;letter-spacing:-0.171px;left:1305px;transform:translateX(-100%);margin-left:-0.17px;">-250,00 €</span>
<span class="t" style="top:769.20px;font-size:13px;color:#1f2942;letter-spacing:0.225px;left:1338px;">Girokonto</span>
<div style="position:absolute;left:1704px;top:766px;width:20px;height:20px;border-radius:3px;background:#fff;border:1px solid #d6dbe8"><svg style="position:absolute;left:4.5px;top:4.5px;" width="9" height="9" viewBox="0 0 9 9"><path d="M4.5 0.4 V8.6 M0.4 4.5 H8.6" stroke="#4f789f" stroke-width="2.1"/></svg></div>
<div class="row" style="top:802px;height:51px;background:#fff"></div>
<div style="position:absolute;left:337px;top:821px;width:13px;height:13px;border:1px solid #767676;border-radius:2px;background:#fff"></div>
<span class="t" style="top:821.20px;font-size:13px;color:#1f2942;letter-spacing:-0.548px;left:378.5px;">01.04.2024</span>
<span class="t" style="top:812.62px;font-size:12.5px;color:#1f2942;letter-spacing:-0.808px;left:553.4px;">HANSEMERKUR VERS.</span>
<span class="t" style="top:832.31px;font-size:10.5px;color:#82889a;letter-spacing:-0.435px;left:553.4px;">AUSLANDSKRANKENVERSICHERUNG, JAEHRL ICH</span>
<span class="t" style="top:821.20px;font-size:13px;color:#2a3450;letter-spacing:-0.400px;left:1305px;transform:translateX(-100%);margin-left:-0.40px;">-12,38 €</span>
<span class="t" style="top:821.20px;font-size:13px;color:#1f2942;letter-spacing:0.225px;left:1338px;">Girokonto</span>
<div style="position:absolute;left:1704px;top:818px;width:20px;height:20px;border-radius:3px;background:#fff;border:1px solid #d6dbe8"><svg style="position:absolute;left:4.5px;top:4.5px;" width="9" height="9" viewBox="0 0 9 9"><path d="M4.5 0.4 V8.6 M0.4 4.5 H8.6" stroke="#4f789f" stroke-width="2.1"/></svg></div>
<div style="position:absolute;left:1801px;top:340px;width:1.3px;height:521px;background:#fff"></div>
<div style="position:absolute;left:1878px;top:340px;width:15px;height:521px;background:#fafafa"></div>
<svg style="position:absolute;left:1880px;top:345px;" width="10" height="7" viewBox="0 0 10 7"><path d="M1 6.2 L5 0.9 L9 6.2 Z" fill="#8a8a8a" stroke="#8a8a8a" stroke-width="1" stroke-linejoin="round"/></svg>
<div style="position:absolute;left:1881px;top:358px;width:8.6px;height:246px;background:#8d8d8d;border-radius:4.3px"></div>
<svg style="position:absolute;left:1880px;top:850px;" width="10" height="7" viewBox="0 0 10 7"><path d="M1 0.8 L5 6.1 L9 0.8 Z" fill="#8a8a8a" stroke="#8a8a8a" stroke-width="1" stroke-linejoin="round"/></svg>
<span class="t" style="left:1909px;top:356.5px;font-size:13px;color:#2a3450;transform-origin:0 0;transform:rotate(90deg);line-height:11px">Filter</span>
</section>

<footer>
<div style="position:absolute;left:308px;top:861px;width:1600px;height:51px;background:#fff;border-top:1px solid #dfe3ee"></div>
<span class="t" style="top:882.50px;font-size:13px;color:#303a56;letter-spacing:0.118px;left:966.8px;">Einträge pro Seite</span>
<div style="position:absolute;left:1081.3px;top:876.4px;width:71.6px;height:24px;background:#f6f7fb;border:1px solid #d9deea;border-radius:3px"></div>
<span class="t" style="top:883.94px;font-size:12px;color:#3b4660;letter-spacing:-0.180px;left:1090.5px;">20</span>
<svg style="position:absolute;left:1131px;top:886.2px;" width="12" height="8" viewBox="0 0 12 8"><path d="M1.2 1.2 L6 6 L10.8 1.2" fill="none" stroke="#8d8d8d" stroke-width="1.6" stroke-linecap="round" stroke-linejoin="round"/></svg>
<svg style="position:absolute;left:1159px;top:883.5px;" width="7" height="10" viewBox="0 0 7 10"><path d="M5.6 1 L1.4 5 L5.6 9" fill="none" stroke="#555d70" stroke-width="1.5" stroke-linecap="round" stroke-linejoin="round"/></svg>
<div style="position:absolute;left:1173px;top:881px;width:16px;height:15.6px;background:#ee7d26;border-radius:3px"></div>
<span class="t" style="top:883.09px;font-size:11px;color:#fff;font-weight:700;left:1181px;transform:translateX(-50%);margin-left:0.00px;">1</span>
<span class="t" style="top:883.09px;font-size:11px;color:#303a56;letter-spacing:-0.725px;left:1194px;">2</span>
<svg style="position:absolute;left:1205.8px;top:887.9px;overflow:visible" width="8.4" height="2.3" viewBox="0 0 8.4 2.3"><circle cx="1.05" cy="1.05" r="1.05" fill="#303a56"/><circle cx="3.95" cy="1.05" r="1.05" fill="#303a56"/><circle cx="6.85" cy="1.05" r="1.05" fill="#303a56"/></svg>
<span class="t" style="top:883.09px;font-size:11px;color:#303a56;letter-spacing:-1.225px;left:1217.9px;">13</span>
<svg style="position:absolute;left:1239px;top:883.5px;" width="7" height="10" viewBox="0 0 7 10"><path d="M1.4 1 L5.6 5 L1.4 9" fill="none" stroke="#1f2942" stroke-width="1.7" stroke-linecap="round" stroke-linejoin="round"/></svg>
<div style="position:absolute;left:1786px;top:846.7px;width:54px;height:54px;border-radius:50%;background:#ed751c;box-shadow:0 1px 5px rgba(0,0,0,.25)"></div>
<span class="t" style="top:853.72px;font-size:40.5px;color:#fff;left:1813px;transform:translateX(-50%);margin-left:0.00px;">?</span>
<div style="position:absolute;left:1775.8px;top:843.8px;width:25.5px;height:23.4px;border-radius:50%;background:#e63a5e"></div>
<span class="t" style="top:849.72px;font-size:12.5px;color:#fff;left:1788.6px;transform:translateX(-50%);margin-left:0.00px;">9</span>
</footer>

</body>
</html>
